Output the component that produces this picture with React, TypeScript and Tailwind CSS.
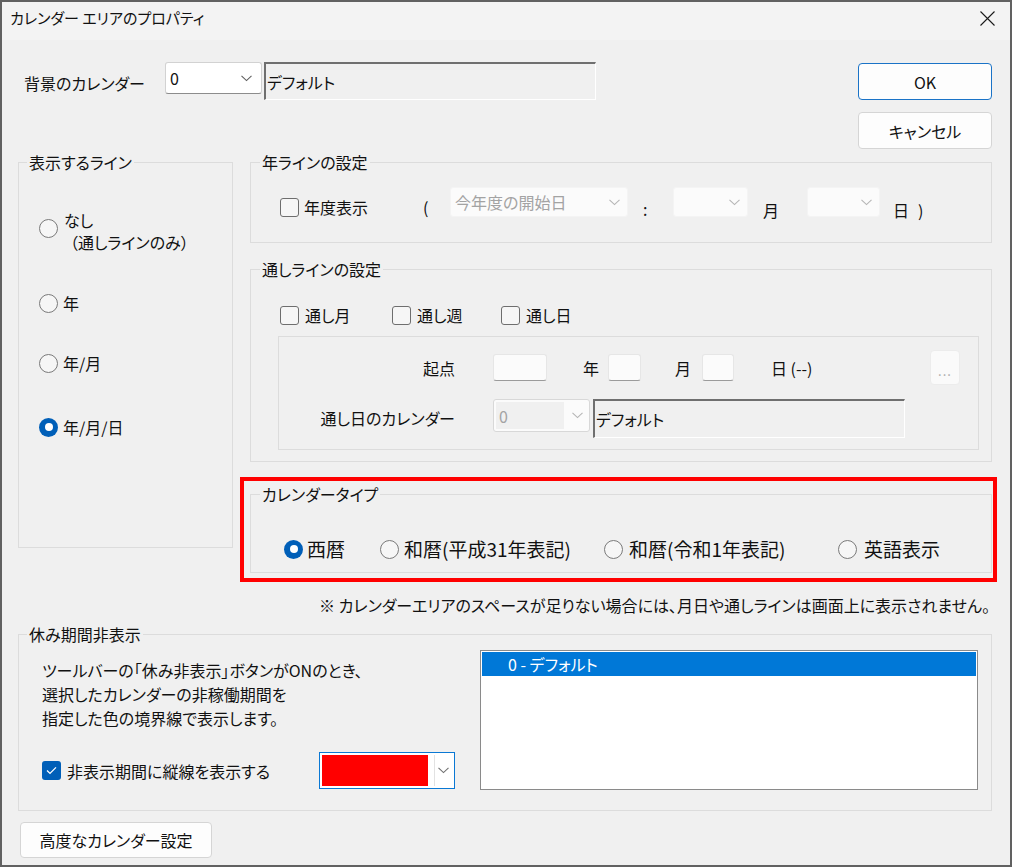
import React from 'react';

const Chevron = ({ color = '#5f5f5f' }: { color?: string }) => (
  <svg width="11" height="7" viewBox="0 0 11 7" fill="none">
    <polyline points="0.5,0.8 5.5,5.6 10.5,0.8" stroke={color} strokeWidth="1.1" />
  </svg>
);

const Radio = ({ checked = false }: { checked?: boolean }) =>
  checked ? (
    <span className="w-[19px] h-[19px] shrink-0 rounded-full bg-[#005fb8] flex items-center justify-center">
      <span className="block w-[8px] h-[8px] rounded-full bg-white" />
    </span>
  ) : (
    <span className="block w-[19px] h-[19px] shrink-0 rounded-full border border-[#7a7a7a] bg-[#f6f6f6]" />
  );

const Checkbox = ({ checked = false }: { checked?: boolean }) =>
  checked ? (
    <span className="w-[19px] h-[19px] shrink-0 rounded-[3px] bg-[#005fb8] flex items-center justify-center">
      <svg width="11" height="9" viewBox="0 0 11 9" fill="none">
        <polyline points="1,4.6 4,7.4 10,1.4" stroke="#ffffff" strokeWidth="1.3" />
      </svg>
    </span>
  ) : (
    <span className="block w-[19px] h-[19px] shrink-0 rounded-[3px] border border-[#6e6e6e] bg-[#f6f6f6]" />
  );

// Disabled Win11 combo box
function DisabledCombo({ width, text }: { width: string; text?: string }) {
  return (
    <div className={`${width} h-[30px] mb-[10px] rounded-[3px] bg-[#fbfbfb] border border-[#f4f4f4] flex items-center justify-between pl-[4px] pr-[7px]`}>
      <span className="text-[#a3a3a3]">{text}</span>
      <Chevron color="#b5b5b5" />
    </div>
  );
}

const Field = ({ width, height }: { width: string; height: string }) => (
  <div className={`${width} ${height} flex items-center pl-[1px] bg-[#f0f0f0] border-t-2 border-l-2 border-[#6f6f6f] border-r border-b border-r-white border-b-white`}>
    デフォルト
  </div>
);

const SmallInput = ({ width }: { width: string }) => (
  <div className={`${width} h-[27px] shrink-0 rounded-[3px] bg-[#fbfbfb] border border-[#e6e6e6] border-b-[#9b9b9b]`} />
);

export default function App() {
  return (
    <div className="w-[1012px] h-[867px] border-2 border-[#616161] bg-[#f0f0f0] flex flex-col text-[16px] leading-[20px] text-[#111] [font-feature-settings:'palt'] font-['Noto_Sans_CJK_JP','Liberation_Sans',sans-serif]">
      {/* title bar */}
      <div className="h-[38px] shrink-0 bg-[#f3f3f3] flex items-start justify-between pl-[8px] pr-[15px] pt-[6px]">
        <span className="text-[15px] leading-[20px]">カレンダー エリアのプロパティ</span>
        <svg width="15" height="15" viewBox="0 0 15 15" className="mt-[3px]">
          <path d="M0.5 0.5 L14.5 14.5 M14.5 0.5 L0.5 14.5" stroke="#1a1a1a" strokeWidth="1.1" />
        </svg>
      </div>

      <div className="flex flex-col pl-[16px] pr-[18px]">
        {/* background calendar + buttons */}
        <div className="flex items-start mt-[22px]">
          <span className="ml-[6px] mt-[11px] w-[141px] shrink-0">背景のカレンダー</span>
          <div className="w-[97px] h-[32px] rounded-[3px] bg-white border border-[#d2d2d2] border-b-[#8c8c8c] flex items-center justify-between pl-[4px] pr-[9px]">
            <span>0</span>
            <Chevron />
          </div>
          <div className="ml-[2px]">
            <Field width="w-[332px]" height="h-[38px]" />
          </div>
          <div className="ml-auto w-[134px] flex flex-col gap-[12px]">
            <button className="mt-[1px] h-[37px] rounded-[4px] bg-[#fdfdfd] border-[1.5px] border-[#1a73c7]">OK</button>
            <button className="h-[37px] rounded-[4px] bg-[#fdfdfd] border border-[#d5d5d5]">キャンセル</button>
          </div>
        </div>

        <div className="flex items-start mt-[3px]">
          {/* 表示するライン */}
          <fieldset className="w-[215px] h-[396px] shrink-0 border border-[#dcdcdc] min-w-0">
            <legend className="ml-[8px] px-[2px] leading-[20px]">表示するライン</legend>
            <div className="flex flex-col">
              <div className="flex items-start mt-[37px]">
                <span className="ml-[20px] mt-[10px]"><Radio /></span>
                <span className="ml-[6px] leading-[22px] flex flex-col">
                  <span>なし</span>
                  <span className="pl-[6px]">（通しラインのみ）</span>
                </span>
              </div>
              <div className="flex items-center mt-[40px]">
                <span className="ml-[20px]"><Radio /></span>
                <span className="ml-[5px]">年</span>
              </div>
              <div className="flex items-center mt-[40px]">
                <span className="ml-[20px]"><Radio /></span>
                <span className="ml-[5px]">年/月</span>
              </div>
              <div className="flex items-center mt-[44px]">
                <span className="ml-[20px]"><Radio checked /></span>
                <span className="ml-[5px]">年/月/日</span>
              </div>
            </div>
          </fieldset>

          <div className="ml-[17px] w-[742px] flex flex-col">
            {/* 年ラインの設定 */}
            <fieldset className="h-[91px] border border-[#dcdcdc] min-w-0">
              <legend className="ml-[9px] px-[2px] leading-[20px]">年ラインの設定</legend>
              <div className="flex items-center mt-[15px]">
                <span className="ml-[29px]"><Checkbox /></span>
                <span className="w-[124px] shrink-0 pl-[5px]">年度表示</span>
                <span className="w-[27px] shrink-0">(</span>
                <DisabledCombo width="w-[178px]" text="今年度の開始日" />
                <span className="ml-[15px] w-[30px] shrink-0 mt-[4px]">:</span>
                <DisabledCombo width="w-[75px]" />
                <span className="ml-[15px] w-[44px] shrink-0 mt-[6px]">月</span>
                <DisabledCombo width="w-[73px]" />
                <span className="ml-[13px] mt-[6px]">日</span>
                <span className="ml-[9px] mt-[6px]">)</span>
              </div>
            </fieldset>

            {/* 通しラインの設定 */}
            <fieldset className="mt-[16px] h-[203px] border border-[#dcdcdc] min-w-0">
              <legend className="ml-[9px] px-[2px] leading-[20px]">通しラインの設定</legend>
              <div className="flex items-center mt-[26px] ml-[29px]">
                <div className="w-[112px] flex items-center shrink-0">
                  <Checkbox />
                  <span className="ml-[6px]">通し月</span>
                </div>
                <div className="w-[109px] flex items-center shrink-0">
                  <Checkbox />
                  <span className="ml-[6px]">通し週</span>
                </div>
                <div className="flex items-center shrink-0">
                  <Checkbox />
                  <span className="ml-[6px]">通し日</span>
                </div>
              </div>
              <div className="mt-[11px] ml-[27px] w-[701px] h-[114px] border border-[#dcdcdc] flex flex-col">
                <div className="flex items-center mt-[13px] h-[35px]">
                  <span className="w-[176px] shrink-0 text-right">起点</span>
                  <span className="ml-[38px]"><SmallInput width="w-[54px]" /></span>
                  <span className="ml-[36px] w-[25px] shrink-0">年</span>
                  <SmallInput width="w-[33px]" />
                  <span className="ml-[34px] w-[27px] shrink-0">月</span>
                  <SmallInput width="w-[32px]" />
                  <span className="ml-[37px]">日 (--)</span>
                  <div className="ml-auto mr-[18px] w-[30px] h-[35px] rounded-[4px] bg-[#fafafa] border border-[#ececec] flex items-center justify-center pt-[6px] text-[#a8a8a8] text-[13px] tracking-[1px]">
                    ...
                  </div>
                </div>
                <div className="flex items-start mt-[14px]">
                  <span className="w-[176px] shrink-0 text-right mt-[9px]">通し日のカレンダー</span>
                  <div className="ml-[38px] w-[97px] h-[33px] rounded-[3px] bg-[#fbfbfb] border border-[#d8d8d8] flex items-center p-[2px]">
                    <div className="w-[68px] h-full bg-[#f0f0f0] flex items-center pl-[3px] text-[#a3a3a3]">0</div>
                    <span className="ml-[8px]"><Chevron color="#b5b5b5" /></span>
                  </div>
                  <div className="ml-[3px]">
                    <Field width="w-[312px]" height="h-[39px]" />
                  </div>
                </div>
              </div>
            </fieldset>

            {/* カレンダータイプ */}
            <div className="relative mt-[22px]">
              <fieldset className="h-[89px] border border-[#dcdcdc] min-w-0">
                <legend className="ml-[9px] px-[2px] leading-[20px]">カレンダータイプ</legend>
                <div className="flex items-center mt-[34px] text-[19px] leading-[22px]">
                  <div className="ml-[33px] w-[96px] flex items-center shrink-0">
                    <Radio checked />
                    <span className="ml-[4px]">西暦</span>
                  </div>
                  <div className="w-[224px] flex items-center shrink-0">
                    <Radio />
                    <span className="ml-[5px]">和暦(平成31年表記)</span>
                  </div>
                  <div className="w-[234px] flex items-center shrink-0">
                    <Radio />
                    <span className="ml-[6px]">和暦(令和1年表記)</span>
                  </div>
                  <div className="flex items-center shrink-0">
                    <Radio />
                    <span className="ml-[7px]">英語表示</span>
                  </div>
                </div>
              </fieldset>
              <div className="absolute left-[-10px] right-[-5px] top-[-7px] bottom-[-9px] border-4 border-[#ff0000] pointer-events-none" />
            </div>
          </div>
        </div>

        <div className="mt-[22px] text-right mr-[2px] whitespace-nowrap">
          ※ カレンダーエリアのスペースが足りない場合には、月日や通しラインは画面上に表示されません。
        </div>

        {/* 休み期間非表示 */}
        <fieldset className="mt-[9px] h-[187px] border border-[#dcdcdc] min-w-0">
          <legend className="ml-[8px] px-[2px] leading-[20px]">休み期間非表示</legend>
          <div className="flex items-start">
            <div className="ml-[23px] w-[413px] shrink-0 flex flex-col">
              <div className="mt-[14px] leading-[24px] whitespace-nowrap">
                ツールバーの「休み非表示」ボタンがONのとき、<br />
                選択したカレンダーの非稼働期間を<br />
                指定した色の境界線で表示します。
              </div>
              <div className="mt-[22px] h-[37px] flex items-center">
                <Checkbox checked />
                <span className="ml-[6px]">非表示期間に縦線を表示する</span>
                <div className="ml-auto w-[136px] h-[37px] border-[1.5px] border-[#0a78d4] bg-white flex items-stretch p-[2px]">
                  <div className="w-[106px] bg-[#ff0000]" />
                  <div className="ml-[6px] flex-1 border-l border-[#e2e2e2] flex items-center justify-center">
                    <Chevron color="#707070" />
                  </div>
                </div>
              </div>
            </div>
            <div className="ml-[25px] mt-[6px] w-[498px] h-[140px] border border-[#8a8a8a] bg-white p-[1px]">
              <div className="h-[24px] bg-[#0078d7] text-white flex items-center pl-[26px] whitespace-pre">0 - デフォルト</div>
            </div>
          </div>
        </fieldset>

        <button className="mt-[11px] ml-[2px] w-[192px] h-[36px] rounded-[4px] bg-[#fdfdfd] border border-[#d5d5d5] flex items-center justify-center">
          高度なカレンダー設定
        </button>
      </div>
    </div>
  );
}
